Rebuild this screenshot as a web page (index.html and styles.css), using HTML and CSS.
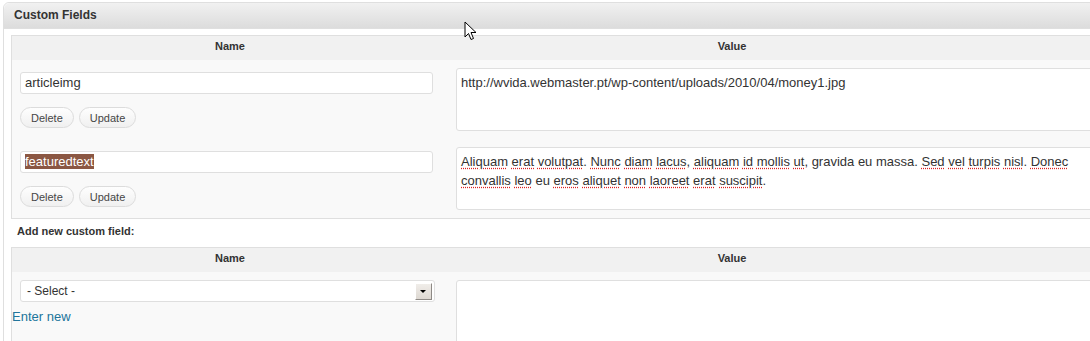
FILE: index.html
```html
<!DOCTYPE html>
<html>
<head>
    <title>Custom Fields</title>
    <link rel="stylesheet" href="styles.css">
</head>
<body>
    <div class="wrap">
        <div class="postbox">
            <h3 class="postbox-title">Custom Fields</h3>
            <div class="inside">
                <div class="meta-table">
                    <div class="meta-head">
                        <div class="th th-name">Name</div>
                        <div class="th th-value">Value</div>
                    </div>
                    <div class="meta-row">
                        <div class="cell-name">
                            <div class="field">articleimg</div>
                            <div class="actions">
                                <button class="btn">Delete</button>
                                <button class="btn">Update</button>
                            </div>
                        </div>
                        <div class="cell-value">
                            <div class="area">http://wvida.webmaster.pt/wp-content/uploads/2010/04/money1.jpg</div>
                        </div>
                    </div>
                    <div class="meta-row">
                        <div class="cell-name">
                            <div class="field"><span class="selected">featuredtext</span></div>
                            <div class="actions">
                                <button class="btn">Delete</button>
                                <button class="btn">Update</button>
                            </div>
                        </div>
                        <div class="cell-value">
                            <div class="area"><span class="sp">Aliquam</span> <span class="sp">erat</span> <span class="sp">volutpat</span>. <span class="sp">Nunc</span> <span class="sp">diam</span> <span class="sp">lacus</span>, <span class="sp">aliquam</span> <span class="sp">id</span> <span class="sp">mollis</span> <span class="sp">ut</span>, gravida eu massa. <span class="sp">Sed</span> <span class="sp">vel</span> <span class="sp">turpis</span> <span class="sp">nisl</span>. <span class="sp">Donec</span> <span class="sp">convallis</span> <span class="sp">leo</span> eu <span class="sp">eros</span> <span class="sp">aliquet</span> <span class="sp">non</span> <span class="sp">laoreet</span> <span class="sp">erat</span> <span class="sp">suscipit</span>.</div>
                        </div>
                    </div>
                </div>

                <p class="add-title">Add new custom field:</p>

                <div class="meta-table">
                    <div class="meta-head">
                        <div class="th th-name">Name</div>
                        <div class="th th-value">Value</div>
                    </div>
                    <div class="meta-row new-row">
                        <div class="cell-name new-name">
                            <div class="select">
                                <span>- Select -</span>
                                <span class="select-btn"></span>
                            </div>
                            <a href="#" class="enter-new">Enter new</a>
                        </div>
                        <div class="cell-value new-value">
                            <div class="area"></div>
                        </div>
                    </div>
                </div>
            </div>
        </div>
    </div>

    <svg class="cursor" width="13" height="20" viewBox="0 0 13 20">
        <path d="M1 1 L1 16 L4.5 12.5 L7 18.5 L9.5 17.5 L7 11.5 L12 11.5 Z" fill="#fff" stroke="#000" stroke-width="1" stroke-linejoin="round"/>
    </svg>
</body>
</html>
```

FILE: styles.css
```css
body {
    margin: 0;
    background: #fff;
    font-family: "Liberation Sans", Arial, sans-serif;
    color: #333;
    overflow: hidden;
}
.wrap {
    padding: 2px 0 0 3px;
}
.postbox {
    width: 1200px;
    border: 1px solid #dfdfdf;
    border-radius: 6px 0 0 0;
    background: #fff;
}
.postbox-title {
    margin: 0;
    height: 25px;
    line-height: 25px;
    padding-left: 10px;
    font-size: 12px;
    font-weight: bold;
    color: #333;
    background: linear-gradient(#f1f1f1, #dcdcdc);
    border-bottom: 1px solid #dfdfdf;
    border-radius: 6px 0 0 0;
}
.inside {
    padding: 6px 0 20px 7px;
}
.meta-table {
    width: 1150px;
    border: 1px solid #dfdfdf;
    background: #f9f9f9;
}
.meta-head {
    display: grid;
    grid-template-columns: 436px 568px;
    background: #f1f1f1;
    height: 24px;
}
.th {
    font-size: 11px;
    font-weight: bold;
    text-align: center;
    line-height: 17px;
    padding-top: 2px;
    color: #333;
}
.meta-row {
    display: grid;
    grid-template-columns: 436px 1fr;
    height: 79px;
}
.cell-name {
    padding: 12px 0 0 8px;
}
.cell-value {
    padding: 8px 0 0 8px;
}
.field {
    width: 403px;
    height: 20px;
    border: 1px solid #dfdfdf;
    border-radius: 3px;
    background: #fff;
    font-size: 13px;
    line-height: 20px;
    padding: 0 4px;
    color: #333;
}
.selected {
    background: #8b5743;
    color: #fff;
}
.actions {
    display: flex;
    gap: 5px;
    margin-top: 13px;
}
.btn {
    font-family: "Liberation Sans", Arial, sans-serif;
    font-size: 11px;
    color: #464646;
    height: 21px;
    padding: 0 10px;
    border: 1px solid #dcdcdc;
    border-radius: 11px;
    background: linear-gradient(#fefefe, #f0f0f0);
}
.area {
    height: 53px;
    width: 645px;
    border: 1px solid #dfdfdf;
    border-radius: 3px;
    background: #fff;
    font-size: 13px;
    line-height: 19px;
    padding: 4px 4px;
    color: #333;
}
.sp {
    text-decoration: underline dotted #d22;
    text-underline-offset: 2px;
}
.add-title {
    margin: 0;
    height: 28px;
    line-height: 25px;
    padding-left: 6px;
    font-size: 11px;
    font-weight: bold;
    color: #333;
}
.new-row {
    height: 80px;
}
.new-name {
    padding: 8px 0 0 0;
}
.select {
    margin-left: 8px;
    width: 407px;
    height: 20px;
    border: 1px solid #dfdfdf;
    border-radius: 3px;
    background: #fff;
    font-size: 12px;
    line-height: 20px;
    padding-left: 6px;
    display: flex;
    justify-content: space-between;
    align-items: center;
    color: #333;
}
.select-btn {
    width: 15px;
    height: 15px;
    margin-right: 2px;
    background: linear-gradient(#f0ede9, #ddd8d2);
    border-right: 1px solid #8e8a86;
    border-bottom: 1px solid #8e8a86;
    border-top: 1px solid #fff;
    border-left: 1px solid #fff;
    position: relative;
}
.select-btn::after {
    content: "";
    position: absolute;
    left: 4px;
    top: 6px;
    border-left: 3px solid transparent;
    border-right: 3px solid transparent;
    border-top: 3px solid #000;
}
.enter-new {
    display: block;
    margin-top: 7px;
    font-size: 13px;
    color: #21759b;
    text-decoration: none;
}
.new-value .area {
    height: 70px;
}
.cursor {
    position: absolute;
    left: 464px;
    top: 21px;
}
```
